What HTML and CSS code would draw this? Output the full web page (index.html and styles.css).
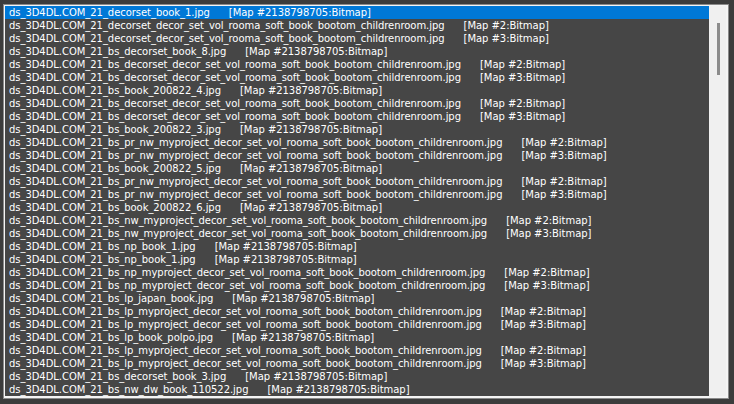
FILE: index.html
```html
<!DOCTYPE html>
<html>
<head>
<meta charset="utf-8">
<link rel="stylesheet" href="styles.css">
</head>
<body>
<div class="frame">
  <div class="inner">
    <ul class="list">
      <li class="row selected"><span class="name">ds_3D4DL.COM_21_decorset_book_1.jpg</span><span class="map">[Map #2138798705:Bitmap]</span></li>
      <li class="row"><span class="name">ds_3D4DL.COM_21_decorset_decor_set_vol_rooma_soft_book_bootom_childrenroom.jpg</span><span class="map">[Map #2:Bitmap]</span></li>
      <li class="row"><span class="name">ds_3D4DL.COM_21_decorset_decor_set_vol_rooma_soft_book_bootom_childrenroom.jpg</span><span class="map">[Map #3:Bitmap]</span></li>
      <li class="row"><span class="name">ds_3D4DL.COM_21_bs_decorset_book_8.jpg</span><span class="map">[Map #2138798705:Bitmap]</span></li>
      <li class="row"><span class="name">ds_3D4DL.COM_21_bs_decorset_decor_set_vol_rooma_soft_book_bootom_childrenroom.jpg</span><span class="map">[Map #2:Bitmap]</span></li>
      <li class="row"><span class="name">ds_3D4DL.COM_21_bs_decorset_decor_set_vol_rooma_soft_book_bootom_childrenroom.jpg</span><span class="map">[Map #3:Bitmap]</span></li>
      <li class="row"><span class="name">ds_3D4DL.COM_21_bs_book_200822_4.jpg</span><span class="map">[Map #2138798705:Bitmap]</span></li>
      <li class="row"><span class="name">ds_3D4DL.COM_21_bs_decorset_decor_set_vol_rooma_soft_book_bootom_childrenroom.jpg</span><span class="map">[Map #2:Bitmap]</span></li>
      <li class="row"><span class="name">ds_3D4DL.COM_21_bs_decorset_decor_set_vol_rooma_soft_book_bootom_childrenroom.jpg</span><span class="map">[Map #3:Bitmap]</span></li>
      <li class="row"><span class="name">ds_3D4DL.COM_21_bs_book_200822_3.jpg</span><span class="map">[Map #2138798705:Bitmap]</span></li>
      <li class="row"><span class="name">ds_3D4DL.COM_21_bs_pr_nw_myproject_decor_set_vol_rooma_soft_book_bootom_childrenroom.jpg</span><span class="map">[Map #2:Bitmap]</span></li>
      <li class="row"><span class="name">ds_3D4DL.COM_21_bs_pr_nw_myproject_decor_set_vol_rooma_soft_book_bootom_childrenroom.jpg</span><span class="map">[Map #3:Bitmap]</span></li>
      <li class="row"><span class="name">ds_3D4DL.COM_21_bs_book_200822_5.jpg</span><span class="map">[Map #2138798705:Bitmap]</span></li>
      <li class="row"><span class="name">ds_3D4DL.COM_21_bs_pr_nw_myproject_decor_set_vol_rooma_soft_book_bootom_childrenroom.jpg</span><span class="map">[Map #2:Bitmap]</span></li>
      <li class="row"><span class="name">ds_3D4DL.COM_21_bs_pr_nw_myproject_decor_set_vol_rooma_soft_book_bootom_childrenroom.jpg</span><span class="map">[Map #3:Bitmap]</span></li>
      <li class="row"><span class="name">ds_3D4DL.COM_21_bs_book_200822_6.jpg</span><span class="map">[Map #2138798705:Bitmap]</span></li>
      <li class="row"><span class="name">ds_3D4DL.COM_21_bs_nw_myproject_decor_set_vol_rooma_soft_book_bootom_childrenroom.jpg</span><span class="map">[Map #2:Bitmap]</span></li>
      <li class="row"><span class="name">ds_3D4DL.COM_21_bs_nw_myproject_decor_set_vol_rooma_soft_book_bootom_childrenroom.jpg</span><span class="map">[Map #3:Bitmap]</span></li>
      <li class="row"><span class="name">ds_3D4DL.COM_21_bs_np_book_1.jpg</span><span class="map">[Map #2138798705:Bitmap]</span></li>
      <li class="row"><span class="name">ds_3D4DL.COM_21_bs_np_book_1.jpg</span><span class="map">[Map #2138798705:Bitmap]</span></li>
      <li class="row"><span class="name">ds_3D4DL.COM_21_bs_np_myproject_decor_set_vol_rooma_soft_book_bootom_childrenroom.jpg</span><span class="map">[Map #2:Bitmap]</span></li>
      <li class="row"><span class="name">ds_3D4DL.COM_21_bs_np_myproject_decor_set_vol_rooma_soft_book_bootom_childrenroom.jpg</span><span class="map">[Map #3:Bitmap]</span></li>
      <li class="row"><span class="name">ds_3D4DL.COM_21_bs_lp_japan_book.jpg</span><span class="map">[Map #2138798705:Bitmap]</span></li>
      <li class="row"><span class="name">ds_3D4DL.COM_21_bs_lp_myproject_decor_set_vol_rooma_soft_book_bootom_childrenroom.jpg</span><span class="map">[Map #2:Bitmap]</span></li>
      <li class="row"><span class="name">ds_3D4DL.COM_21_bs_lp_myproject_decor_set_vol_rooma_soft_book_bootom_childrenroom.jpg</span><span class="map">[Map #3:Bitmap]</span></li>
      <li class="row"><span class="name">ds_3D4DL.COM_21_bs_lp_book_polpo.jpg</span><span class="map">[Map #2138798705:Bitmap]</span></li>
      <li class="row"><span class="name">ds_3D4DL.COM_21_bs_lp_myproject_decor_set_vol_rooma_soft_book_bootom_childrenroom.jpg</span><span class="map">[Map #2:Bitmap]</span></li>
      <li class="row"><span class="name">ds_3D4DL.COM_21_bs_lp_myproject_decor_set_vol_rooma_soft_book_bootom_childrenroom.jpg</span><span class="map">[Map #3:Bitmap]</span></li>
      <li class="row"><span class="name">ds_3D4DL.COM_21_bs_decorset_book_3.jpg</span><span class="map">[Map #2138798705:Bitmap]</span></li>
      <li class="row"><span class="name">ds_3D4DL.COM_21_bs_nw_dw_book_110522.jpg</span><span class="map">[Map #2138798705:Bitmap]</span></li>
    </ul>
    <div class="scrollbar"><div class="thumb"></div></div>
  </div>
</div>
</body>
</html>
```
FILE: styles.css
```css
html, body {
  margin: 0;
  padding: 0;
}
body {
  width: 734px;
  height: 404px;
  background: #3c3c3c;
  overflow: hidden;
  font-family: "DejaVu Sans", "Liberation Sans", sans-serif;
  font-size: 10px;
}
.frame {
  box-sizing: border-box;
  margin: 4px 0 0 3px;
  width: 726px;
  height: 395px;
  border: 1px solid #8a8a8a;
}
.inner {
  box-sizing: border-box;
  height: 100%;
  border-style: solid;
  border-color: #f4f4f4;
  border-width: 1px 2px 2px 1px;
  display: flex;
  background: #464646;
}
.list {
  list-style: none;
  margin: 0;
  padding: 0;
  flex: 1;
  overflow: hidden;
}
.row {
  height: 13px;
  line-height: 13px;
  padding-left: 4px;
  color: #ffffff;
  white-space: nowrap;
  letter-spacing: -0.05px;
}
.row.selected {
  background: #0078d7;
}
.map {
  margin-left: 19px;
}
.scrollbar {
  width: 17px;
  background: #f0f0f0;
  position: relative;
}
.thumb {
  position: absolute;
  left: 8px;
  top: 17px;
  width: 3px;
  height: 52px;
  background: #8c8c8c;
}
```
